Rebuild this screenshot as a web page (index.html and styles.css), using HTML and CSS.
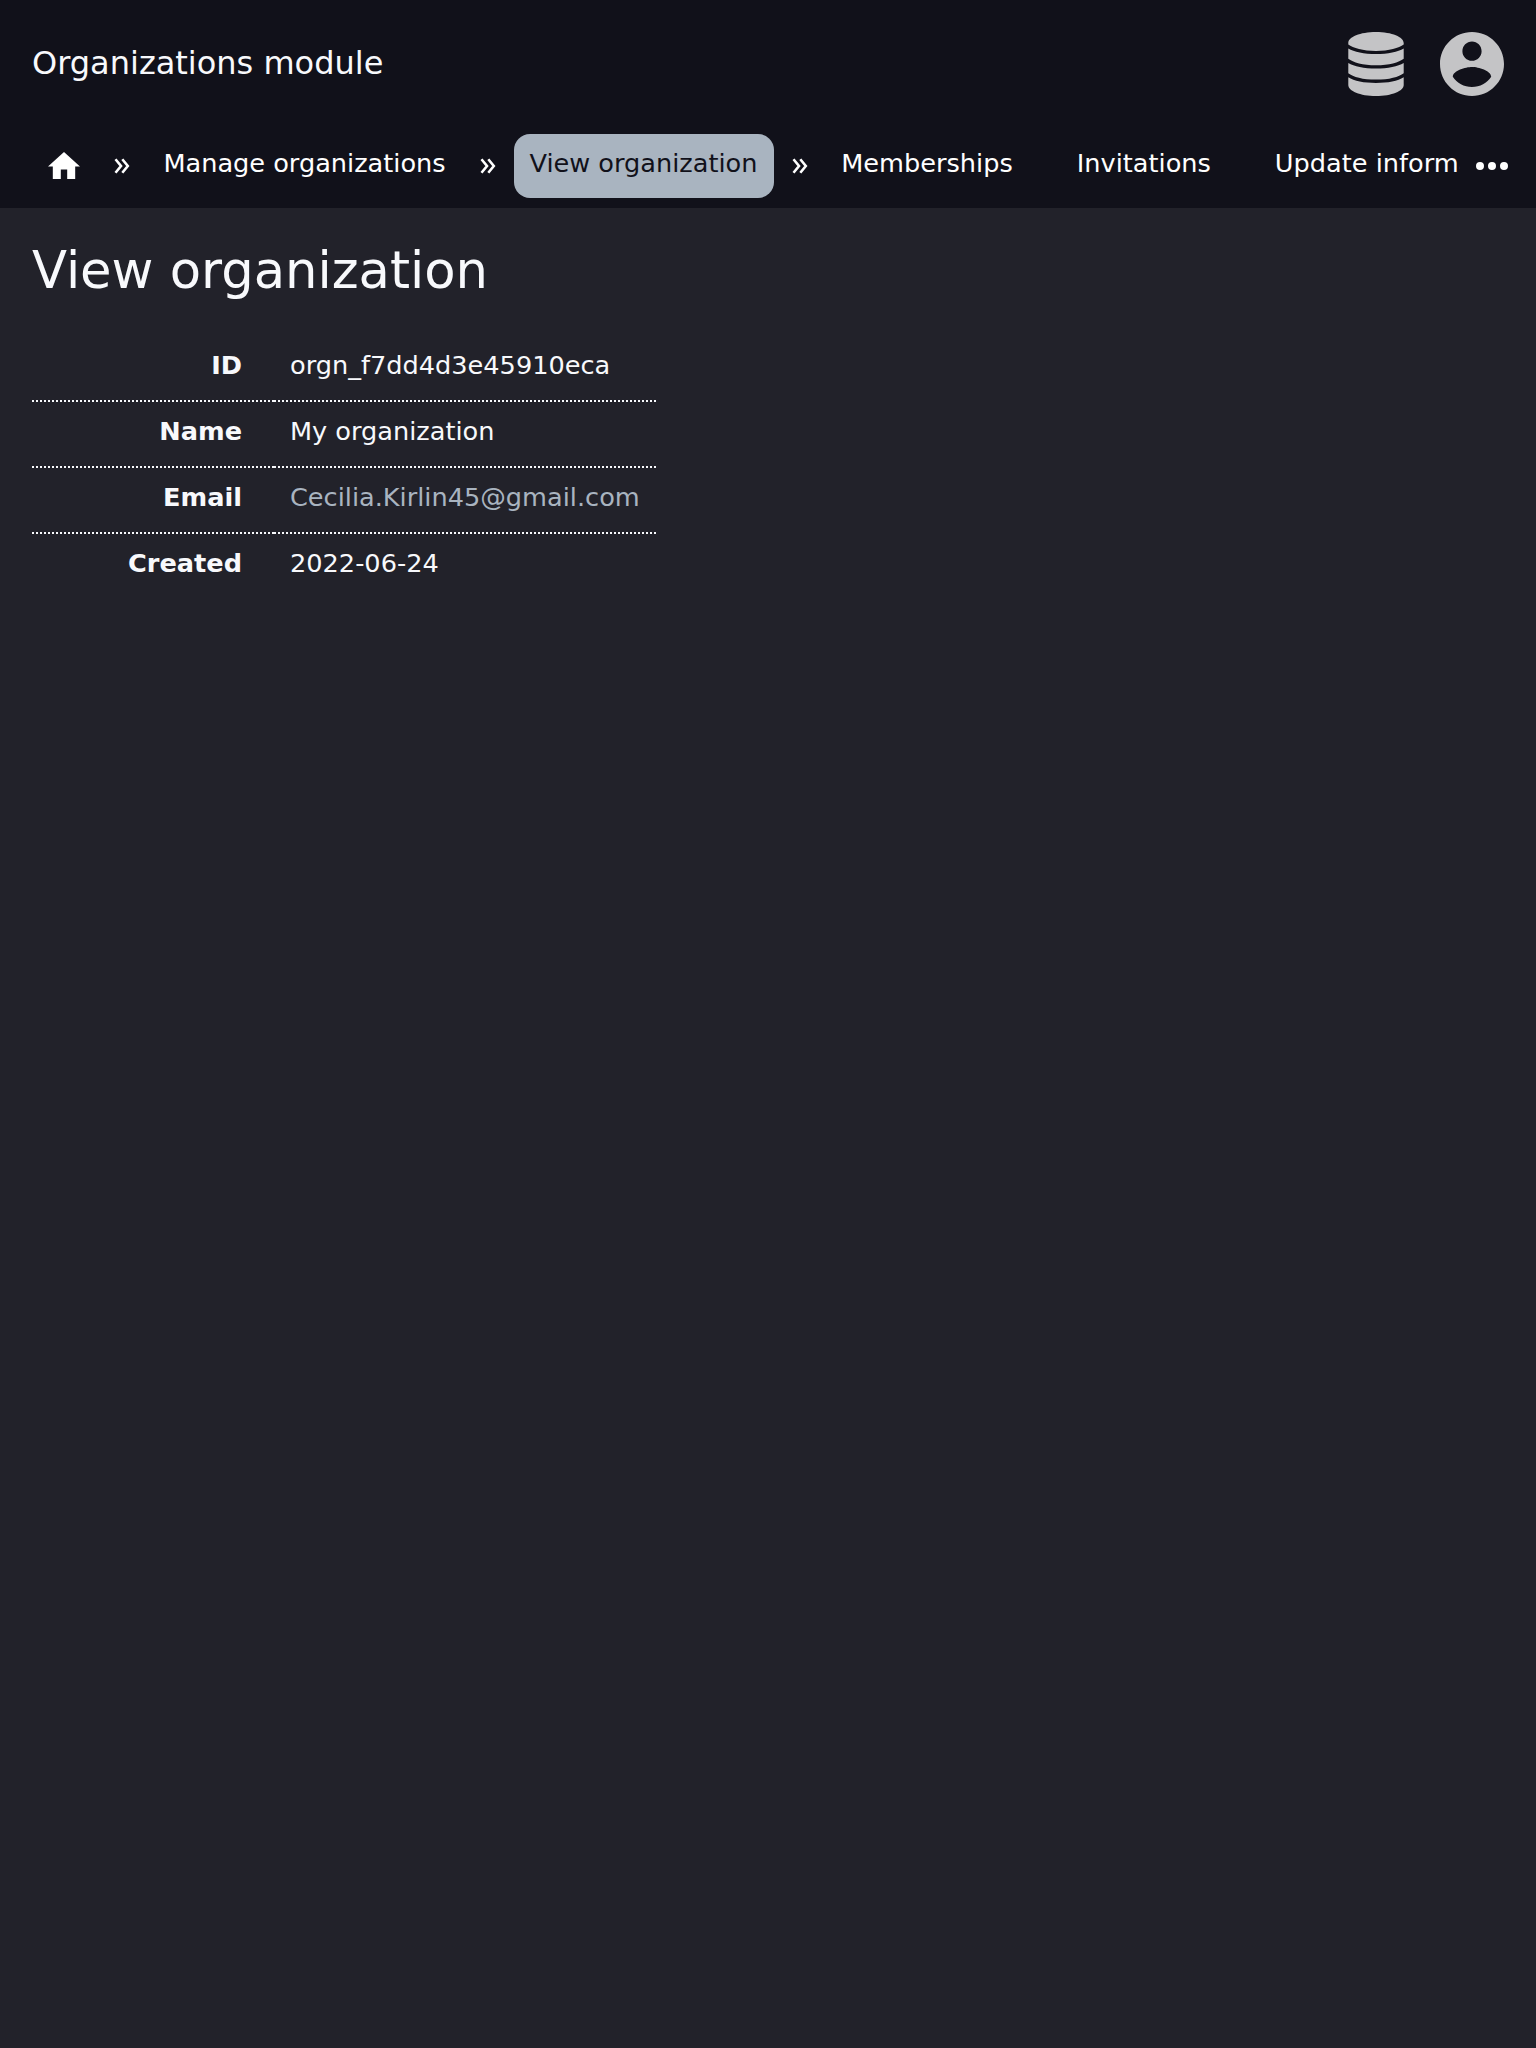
FILE: index.html
```html
<!DOCTYPE html>
<html lang="en">
<head>
<meta charset="utf-8">
<title>View organization</title>
<link rel="stylesheet" href="styles.css">
</head>
<body>
<header class="header">
  <div class="topbar">
    <span class="brand">Organizations module</span>
    <div class="actions">
      <svg class="icon-db" viewBox="0 0 56 64"><path d="M.3 11C.3 5 12 0 28 0s27.700 5 27.700 11v1.600C51 16 41 19 28 19S5 16 .3 12.600zM.3 16.500C6 20 16 22 28 22s22-2 27.700-5.500v10.200C51 30.500 41 33.200 28 33.200S5 30.500 .3 26.700zM.3 31C6 34.500 16 36.500 28 36.500s22-2 27.700-5.500v10.200C51 45 41 47.600 28 47.600S5 45 .3 41.200zM.3 45.300C6 49 16 51 28 51s22-2 27.700-5.700V53c0 6-11.700 11-27.700 11S.3 59 .3 53z"/></svg>
      <svg class="icon-user" viewBox="2 2 20 20"><path d="M12 2C6.480 2 2 6.480 2 12s4.480 10 10 10 10-4.480 10-10S17.520 2 12 2zm0 3c1.660 0 3 1.340 3 3s-1.340 3-3 3-3-1.340-3-3 1.340-3 3-3zm0 14.200c-2.500 0-4.710-1.280-6-3.220.030-1.990 4-3.080 6-3.080 1.990 0 5.970 1.090 6 3.080-1.290 1.940-3.500 3.220-6 3.220z"/></svg>
    </div>
  </div>
  <div class="navbar">
    <nav class="crumbs">
      <a class="crumb home"><svg class="icon-home" viewBox="2 3 20 17"><path d="M10 20v-6h4v6h5v-8h3L12 3 2 12h3v8z"/></svg></a>
      <span class="sep"><svg class="icon-sep" viewBox="0 0 16 16"><path d="M1.500 1.200 7 8l-5.500 6.800M8.300 1.200 13.800 8l-5.500 6.800"/></svg></span>
      <a class="crumb">Manage organizations</a>
      <span class="sep"><svg class="icon-sep" viewBox="0 0 16 16"><path d="M1.500 1.200 7 8l-5.500 6.800M8.300 1.200 13.800 8l-5.500 6.800"/></svg></span>
      <a class="crumb active">View organization</a>
      <span class="sep"><svg class="icon-sep" viewBox="0 0 16 16"><path d="M1.500 1.200 7 8l-5.500 6.800M8.300 1.200 13.800 8l-5.500 6.800"/></svg></span>
      <div class="links">
        <a class="crumb">Memberships</a>
        <a class="crumb">Invitations</a>
        <a class="crumb">Update information</a>
      </div>
    </nav>
    <svg class="icon-more" viewBox="4 10 16 4"><path d="M6 10a2 2 0 1 0 0 4 2 2 0 0 0 0-4zm6 0a2 2 0 1 0 0 4 2 2 0 0 0 0-4zm6 0a2 2 0 1 0 0 4 2 2 0 0 0 0-4z"/></svg>
  </div>
</header>
<main class="main">
  <h1 class="title">View organization</h1>
  <table class="details">
    <tr><th>ID</th><td>orgn_f7dd4d3e45910eca</td></tr>
    <tr><th>Name</th><td>My organization</td></tr>
    <tr><th>Email</th><td><a class="mail">Cecilia.Kirlin45@gmail.com</a></td></tr>
    <tr><th>Created</th><td>2022-06-24</td></tr>
  </table>
</main>
</body>
</html>
```
FILE: styles.css
```css
* { box-sizing: border-box; }
body {
  margin: 0;
  min-height: 100vh;
  background: #22222a;
  color: #f8f9fc;
  font-family: "DejaVu Sans", sans-serif;
  font-size: 25.600px;
}
svg { display: block; fill: currentColor; }
.header { height: 208px; background: #11111a; }
.topbar {
  height: 128px;
  padding: 0 32px;
  display: flex;
  align-items: center;
  justify-content: space-between;
}
.brand { padding-bottom: 2px; font-size: 32px; line-height: 40px; }
.actions { display: flex; gap: 36px; color: #c4c4c6; }
.icon-db { width: 56px; height: 64px; }
.icon-user { width: 64px; height: 64px; }
.navbar {
  height: 80px;
  padding: 6px 28px 10px 32px;
  display: flex;
  align-items: center;
  color: #fff;
}
.crumbs {
  display: flex;
  align-items: center;
  width: 1428px;
  overflow: hidden;
  white-space: nowrap;
}
.crumb {
  height: 64px;
  padding: 0 16.400px 0 15.600px;
  border-radius: 16px;
  line-height: 58px;
  flex: none;
}
.home { padding: 18px 16px 0; }
.active { background: #a9b4c0; color: #11111a; }
.sep {
  width: 51.800px;
  display: flex;
  justify-content: center;
  flex: none;
}
.links { display: flex; gap: 32px; }
.icon-home { width: 32px; height: 27.200px; }
.icon-sep {
  width: 16px;
  height: 16px;
  fill: none;
  stroke: currentColor;
  stroke-width: 2.600;
}
.icon-more { width: 32px; height: 8px; margin-left: 16px; flex: none; }
.main { padding: 32px; }
.title { margin: 0 0 36px; font-size: 51.200px; line-height: 60px; font-weight: 400; }
.details { border-collapse: separate; border-spacing: 0; line-height: 32px; }
.details th, .details td { height: 66px; padding: 0 16px 6px; border-bottom: 2px dotted #f8f9fc; }
.details th { width: 242px; padding-right: 32px; text-align: right; }
.details tr:last-child > * { border-color: transparent; }
.mail { color: #a9b4c0; }
```
